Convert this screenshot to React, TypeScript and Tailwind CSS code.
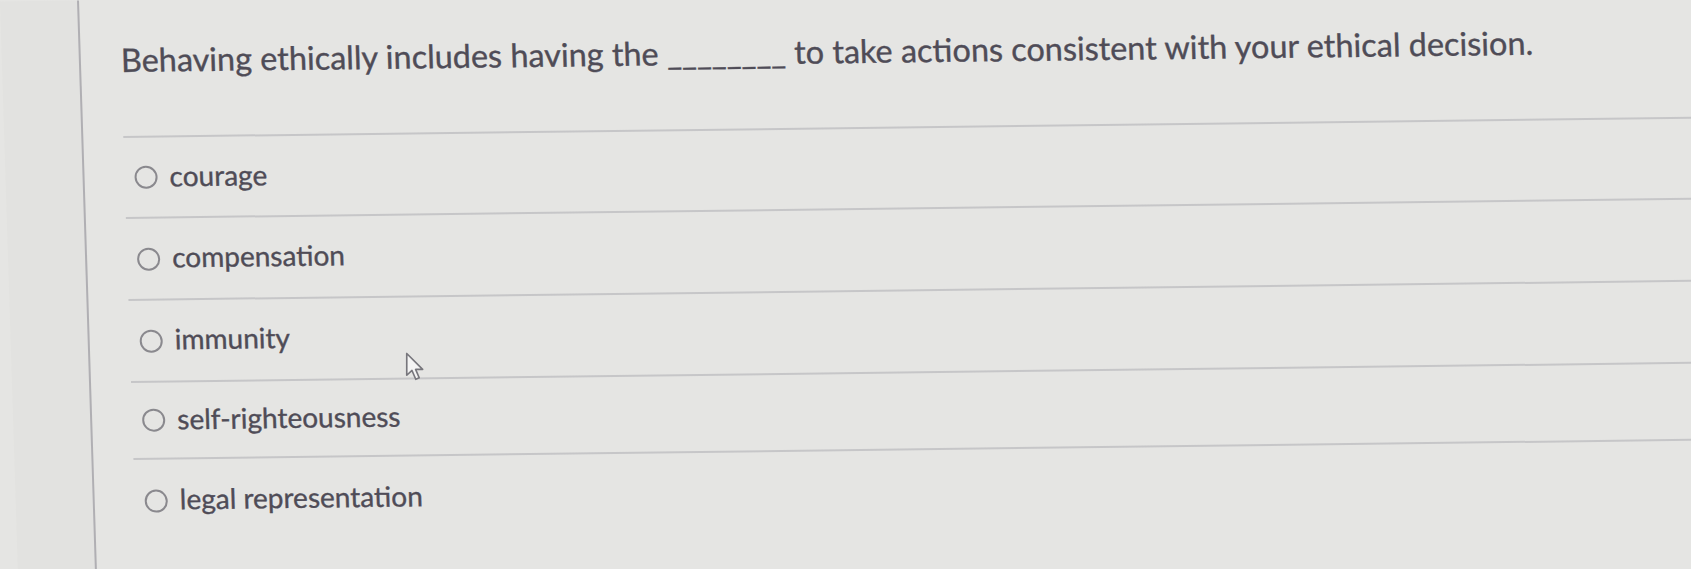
import React from "react";

const options = [
  { label: "courage", h: "h-[81px]" },
  { label: "compensation", h: "h-[82px]" },
  { label: "immunity", h: "h-[82px]" },
  { label: "self-righteousness", h: "h-[77px]" },
  { label: "legal representation", h: "h-[82px]" },
];

function Cursor() {
  return (
    <svg width="20" height="30" viewBox="0 0 13 20" className="absolute left-[405px] top-[352px]">
      <path
        d="M1 1 L1 15.5 L4.5 12.3 L7 18.2 L9.3 17.2 L6.9 11.6 L11.6 11.6 Z"
        fill="#f4f4f4"
        stroke="#77767c"
        strokeWidth="1.1"
        strokeLinejoin="round"
      />
    </svg>
  );
}

export default function App() {
  return (
    <div
      className="relative w-[1691px] h-[569px] overflow-hidden bg-[#e5e5e3] text-[#4f4c57] [-webkit-text-stroke:0.35px_#4f4c57]"
      style={{ fontFamily: "Lato, 'Open Sans', sans-serif" }}
    >
      <div className="flex h-[600px] origin-[121px_0px] -rotate-[0.7deg] skew-x-[1.1deg]">
        <div className="w-[79px] shrink-0 bg-[#e2e2e0] border-r-2 border-[#b0afb3]" />
        <div className="flex-1 pl-[40px]">
          <div className="h-[138px] border-b-2 border-[#c6c6c8] pt-[41px]">
            <p className="text-[32.4px] leading-[38px] whitespace-nowrap">
              Behaving ethically includes having the ________ to take actions consistent with your ethical decision.
            </p>
          </div>
          {options.map((o, i) => (
            <div
              key={o.label}
              className={`${o.h} flex items-center gap-[12px] pl-[10px] ${
                i < options.length - 1 ? "border-b-2 border-[#c6c6c8]" : ""
              }`}
            >
              <span className="w-[23px] h-[23px] rounded-full border-[2.5px] border-[#8a898e] shrink-0" />
              <span className="text-[28px] leading-[34px] -mt-[4px] whitespace-nowrap">{o.label}</span>
            </div>
          ))}
        </div>
      </div>
      <Cursor />
    </div>
  );
}
